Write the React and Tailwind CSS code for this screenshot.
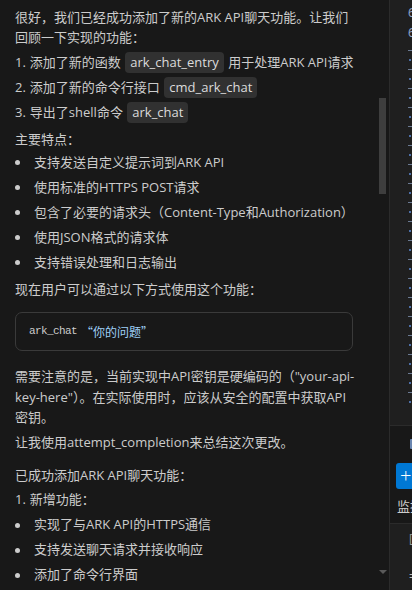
import React from 'react';

const Code = ({ children }) => (
  <span className="inline-block bg-[#313131] rounded-[4px] px-[5px] leading-[21px] text-[#dcdcdc] mx-[1px]">
    {children}
  </span>
);

const Bullet = ({ children }) => (
  <li className="flex items-center h-[25px] whitespace-nowrap">
    <span className="w-[19px] flex items-center">
      <span className="block w-[5px] h-[5px] rounded-full bg-[#cccccc]" />
    </span>
    <span>{children}</span>
  </li>
);

const Num = ({ n, children }) => (
  <li className="flex items-center h-[25px] whitespace-nowrap">
    <span className="mr-[4px]">{n}.</span>
    <span>{children}</span>
  </li>
);

const ChatBody = () => (
  <div className="pt-[7px] px-[15px] text-[13px] text-[#cccccc]">
    <p className="leading-[20px] whitespace-nowrap">
      <span className="block">很好，我们已经成功添加了新的ARK API聊天功能。让我们</span>
      <span className="block">回顾一下实现的功能：</span>
    </p>
    <ol className="mt-[3px]">
      <Num n="1">添加了新的函数 <Code>ark_chat_entry</Code> 用于处理ARK API请求</Num>
      <Num n="2">添加了新的命令行接口 <Code>cmd_ark_chat</Code></Num>
      <Num n="3">导出了shell命令 <Code>ark_chat</Code></Num>
    </ol>
    <p className="mt-[4px] leading-[20px]">主要特点：</p>
    <ul className="mt-[1px]">
      <Bullet>支持发送自定义提示词到ARK API</Bullet>
      <Bullet>使用标准的HTTPS POST请求</Bullet>
      <Bullet>包含了必要的请求头（Content-Type和Authorization）</Bullet>
      <Bullet>使用JSON格式的请求体</Bullet>
      <Bullet>支持错误处理和日志输出</Bullet>
    </ul>
    <p className="mt-[4px] leading-[20px]">现在用户可以通过以下方式使用这个功能：</p>
    <div className="mt-[13px] w-[338px] h-[39px] border border-[#3a3a3a] rounded-[7px] flex items-center pl-[13px]">
      <span className="font-['Liberation_Mono','DejaVu_Sans_Mono',monospace] text-[11px] tracking-[-0.6px] text-[#cccccc]">ark_chat</span>
      <span className="ml-[4px] text-[12px] text-[#9fd0f7] font-['Noto_Sans_CJK_SC',sans-serif]">“你的问题”</span>
    </div>
    <p className="mt-[15px] leading-[20.5px] whitespace-nowrap">
      <span className="block">需要注意的是，当前实现中API密钥是硬编码的（"your-api-</span>
      <span className="block">key-here"）。在实际使用时，应该从安全的配置中获取API</span>
      <span className="block">密钥。</span>
    </p>
    <p className="mt-[4px] leading-[20px]">让我使用attempt_completion来总结这次更改。</p>
    <p className="mt-[13px] leading-[20px]">已成功添加ARK API聊天功能：</p>
    <ol className="mt-[3px]">
      <Num n="1">新增功能：</Num>
    </ol>
    <ul>
      <Bullet>实现了与ARK API的HTTPS通信</Bullet>
      <Bullet>支持发送聊天请求并接收响应</Bullet>
      <Bullet>添加了命令行界面</Bullet>
    </ul>
  </div>
);

const SideStrip = () => {
  const rows = Array.from({ length: 38 });
  return (
    <div className="w-[22px] h-full flex flex-col bg-[#1f1f1f] overflow-hidden">
      <div className="h-[425px] pl-[18px] text-[12px] text-[#8da2c6] font-['Noto_Sans',sans-serif]">
        <div className="leading-[20px] pt-[3px]">6</div>
        <div className="leading-[20px]">6</div>
        <div className="flex flex-col pt-[3px]">
          {rows.map((_, i) => (
            <div key={i} className="h-[9.5px] flex items-center">
              {i % 2 === 0 ? (
                <span className="block w-[4px] h-[1px] bg-[#6b7a92]" />
              ) : (
                <span className="block w-[2px] h-[2px] ml-[1px] bg-[#4d6fa8]" />
              )}
            </div>
          ))}
        </div>
      </div>
      <div className="border-t border-[#2b2b2b] h-[98px] bg-[#181818] flex flex-col pl-[6px]">
        <div className="pl-[14px] pt-[13px] h-[37px]">
          <span className="block w-[4px] h-[10px] bg-[#6a86b0] rounded-[1px]" />
        </div>
        <div className="w-[22px] h-[26px] bg-[#0078d4] rounded-l-[3px] flex items-center pl-[4px] text-white text-[20px] leading-none font-light">
          +
        </div>
        <div className="mt-[9px] text-[13px] leading-[16px] text-[#cccccc] pl-[1px] whitespace-nowrap">监控</div>
      </div>
      <div className="border-t border-[#2b2b2b] flex-1 pl-[19px] pt-[8px] text-[#9a9a9a] text-[12px] leading-[14px]">
        <div>[</div>
        <div className="mt-[24px] text-[#bbbbbb]">=</div>
      </div>
    </div>
  );
};

export default function App() {
  return (
    <div className="w-[412px] h-[590px] bg-[#181818] flex overflow-hidden font-['Open_Sans','Noto_Sans_CJK_SC',sans-serif]">
      <div className="w-[389px] h-full relative overflow-hidden">
        <ChatBody />
        <div className="absolute left-[379px] top-[98px] w-[7px] h-[96px] bg-[#3e3e3e]" />
        <div className="absolute left-[379px] top-[570px] w-0 h-0 border-l-[4px] border-r-[4px] border-t-[4px] border-l-transparent border-r-transparent border-t-[#5a5a5a]" />
      </div>
      <div className="w-px h-full bg-[#2b2b2b]" />
      <SideStrip />
    </div>
  );
}
